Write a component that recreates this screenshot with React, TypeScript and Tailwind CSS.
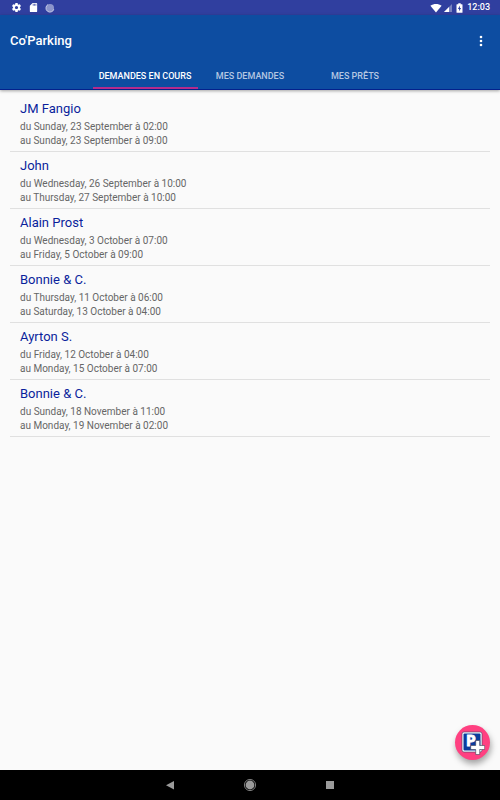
import React from "react";

type Loan = { name: string; from: string; to: string };

const loans: Loan[] = [
  { name: "JM Fangio", from: "du Sunday, 23 September à 02:00", to: "au Sunday, 23 September à 09:00" },
  { name: "John", from: "du Wednesday, 26 September à 10:00", to: "au Thursday, 27 September à 10:00" },
  { name: "Alain Prost", from: "du Wednesday, 3 October à 07:00", to: "au Friday, 5 October à 09:00" },
  { name: "Bonnie & C.", from: "du Thursday, 11 October à 06:00", to: "au Saturday, 13 October à 04:00" },
  { name: "Ayrton S.", from: "du Friday, 12 October à 04:00", to: "au Monday, 15 October à 07:00" },
  { name: "Bonnie & C.", from: "du Sunday, 18 November à 11:00", to: "au Monday, 19 November à 02:00" },
];

const tabs = ["DEMANDES EN COURS", "MES DEMANDES", "MES PRÊTS"];

function StatusBar() {
  return (
    <div className="flex h-[15px] items-center justify-between bg-[#303f9f] pr-[10px] pl-[11px] text-white">
      <div className="flex items-center gap-[6px]">
        <svg className="size-[11px]" viewBox="0 0 24 24" fill="currentColor">
          <path d="M19.43 12.98c.04-.32.07-.64.07-.98s-.03-.66-.07-.98l2.11-1.65c.19-.15.24-.42.12-.64l-2-3.46c-.12-.22-.39-.3-.61-.22l-2.49 1c-.52-.4-1.08-.73-1.69-.98l-.38-2.65C14.46 2.18 14.25 2 14 2h-4c-.25 0-.46.18-.49.42l-.38 2.65c-.61.25-1.17.59-1.69.98l-2.49-1c-.23-.09-.49 0-.61.22l-2 3.46c-.13.22-.07.49.12.64l2.11 1.65c-.04.32-.07.65-.07.98s.03.66.07.98l-2.11 1.65c-.19.15-.24.42-.12.64l2 3.46c.12.22.39.3.61.22l2.49-1c.52.4 1.08.73 1.69.98l.38 2.65c.03.24.24.42.49.42h4c.25 0 .46-.18.49-.42l.38-2.65c.61-.25 1.17-.59 1.69-.98l2.49 1c.23.09.49 0 .61-.22l2-3.46c.12-.22.07-.49-.12-.64l-2.11-1.65zM12 15.5c-1.93 0-3.5-1.57-3.5-3.5s1.57-3.5 3.5-3.5 3.5 1.57 3.5 3.5-1.57 3.5-3.5 3.5z" />
        </svg>
        <svg className="size-[11px]" viewBox="0 0 24 24" fill="currentColor">
          <path fillRule="evenodd" d="M18 2h-8L4 8v12c0 1.100.9 2 2 2h12c1.100 0 2-.9 2-2V4c0-1.100-.9-2-2-2zm-6 6h-1.500V4H12v4zm3 0h-1.500V4H15v4zm3 0h-1.500V4H18v4z" />
        </svg>
        <svg className="size-[10px]" viewBox="0 0 10 10" fill="none">
          <circle cx="5" cy="5" r="4" fill="#8c95cb" />
          <path d="M3 1.600A4 4 0 1 0 8.800 6.200" stroke="#c3c8e6" strokeWidth="1" />
        </svg>
      </div>
      <div className="flex items-center">
        <svg className="h-[10px] w-[12px]" viewBox="0 0 12 10" fill="currentColor">
          <path d="M.4 2.800C3.600.3 8.400.3 11.600 2.800L6 9.600z" />
        </svg>
        <svg className="ml-px h-[10px] w-[9px]" viewBox="0 0 9 10" fill="currentColor">
          <path opacity=".35" d="M9 1v8H1z" />
          <path d="M6 4v5H1z" />
        </svg>
        <svg className="ml-[4px] h-[10px] w-[7px]" viewBox="0 0 7 10">
          <path fill="currentColor" d="M2.300.3h2.400v.9h1.300q.5 0 .5.500v7.500q0 .5-.5.500H1q-.5 0-.5-.5V1.700q0-.5.5-.5h1.300z" />
          <path fill="#303f9f" d="M3.900 2.600v2.300h1.200L3.100 8.300V5.900H1.900z" />
        </svg>
        <time className="ml-[4px] text-[9px] leading-[15px] font-medium">12:03</time>
      </div>
    </div>
  );
}

function Header() {
  return (
    <header className="relative bg-[#0d4da1] shadow-[0_1px_3px_rgba(0,0,0,0.35)]">
      <div className="flex h-[52px] items-center justify-between pr-[14px] pl-[10px]">
        <h1 className="text-[13px] leading-[16px] font-medium text-white">Co'Parking</h1>
        <button type="button" aria-label="Menu" className="flex w-[10px] justify-center text-white">
          <svg className="h-[12px] w-[4px]" viewBox="0 0 4 12" fill="currentColor">
            <circle cx="2" cy="2" r="1.300" />
            <circle cx="2" cy="6" r="1.300" />
            <circle cx="2" cy="10" r="1.300" />
          </svg>
        </button>
      </div>
      <nav role="tablist" className="flex justify-center border-b border-[#04218c]">
        {tabs.map((tab, i) => (
          <button
            key={tab}
            type="button"
            role="tab"
            aria-selected={i === 0}
            className={
              "h-[22px] w-[105px] border-b-2 pb-[2px] text-[9px] leading-[12px] font-medium whitespace-nowrap " +
              (i === 0 ? "border-[#b52b8c] text-white" : "border-transparent text-[#b4c7e2]")
            }
          >
            {tab}
          </button>
        ))}
      </nav>
    </header>
  );
}

function AddButton() {
  return (
    <button
      type="button"
      aria-label="Ajouter une demande"
      className="absolute right-[10px] bottom-[10px] flex size-[35px] items-center justify-center rounded-full bg-[#ff4081] shadow-[1px_4px_6px_rgba(0,0,0,0.35)]"
    >
      <svg className="size-[25px]" viewBox="0 0 25 25">
        <rect x="2" y="2" width="20" height="20" rx="2" fill="#fff" stroke="#3f3f6a" strokeWidth=".6" />
        <rect x="3.500" y="3.500" width="17" height="17" rx="1" fill="#0b3c9c" />
        <text x="6.500" y="16" fontFamily="Roboto, sans-serif" fontSize="14" fontWeight="900" fill="#fff" stroke="#fff" strokeWidth=".8">P</text>
        <path d="M15.700 10.500h4v5h5v4h-5v5h-4v-5h-5v-4h5z" fill="#fff" stroke="#3f3f55" strokeWidth=".6" />
      </svg>
    </button>
  );
}

function NavigationBar() {
  return (
    <footer className="flex h-[30px] items-center justify-center gap-[60px] bg-black text-[#9b9b9b]">
      <button type="button" aria-label="Retour" className="size-[20px]">
        <svg viewBox="0 0 20 20" fill="currentColor">
          <path d="M14 6v8.500L6 10.200z" />
        </svg>
      </button>
      <button type="button" aria-label="Accueil" className="size-[20px]">
        <svg viewBox="0 0 20 20" fill="currentColor">
          <circle cx="10" cy="10" r="4.400" />
          <circle cx="10" cy="10" r="5.600" fill="none" stroke="currentColor" strokeWidth=".8" />
        </svg>
      </button>
      <button type="button" aria-label="Applications" className="size-[20px]">
        <svg viewBox="0 0 20 20" fill="currentColor">
          <rect x="6" y="6" width="8" height="8" />
        </svg>
      </button>
    </footer>
  );
}

export default function App() {
  return (
    <div className="flex min-h-screen flex-col bg-[#fafafa] font-['Roboto',sans-serif]">
      <StatusBar />
      <Header />
      <main className="relative flex-1 px-[10px] pt-[5px]">
        <ul>
          {loans.map((loan, i) => (
            <li key={i} className="border-b border-[#e0e0e0] px-[10px] pt-[6px] pb-[3px]">
              <h2 className="text-[13px] leading-[16px] text-[#0a1f9c]">{loan.name}</h2>
              <div className="pt-[3px] text-[10px] leading-[14px] text-[#666666]">
                <p>{loan.from}</p>
                <p>{loan.to}</p>
              </div>
            </li>
          ))}
        </ul>
        <AddButton />
      </main>
      <NavigationBar />
    </div>
  );
}
